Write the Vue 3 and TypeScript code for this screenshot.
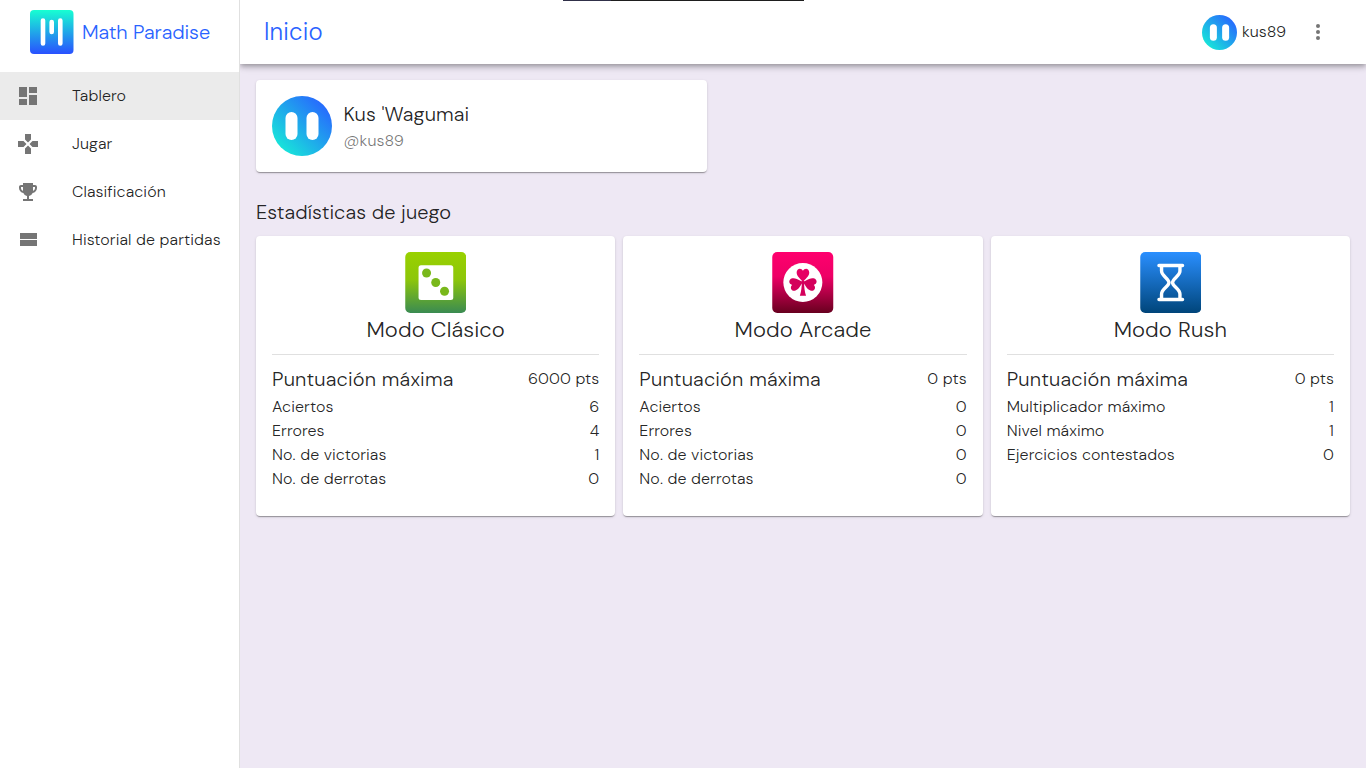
<script setup lang="ts">
interface Row {
  label: string
  value: string
}
interface Mode {
  key: 'classic' | 'arcade' | 'rush'
  name: string
  points: string
  rows: Row[]
}

const menu: { label: string; icon: string }[] = [
  { label: 'Tablero', icon: 'M3 13h8V3H3v10zm0 8h8v-6H3v6zm10 0h8V11h-8v10zm0-18v6h8V3h-8z' },
  {
    label: 'Jugar',
    icon: 'M15 7.5V2H9v5.5l3 3 3-3zM7.500 9H2v6h5.500l3-3-3-3zM9 16.500V22h6v-5.500l-3-3-3 3zM16.500 9l-3 3 3 3H22V9h-5.500z',
  },
  {
    label: 'Clasificación',
    icon: 'M19 5h-2V3H7v2H5c-1.100 0-2 .9-2 2v1c0 2.550 1.920 4.630 4.390 4.940.63 1.500 1.980 2.630 3.610 2.960V19H7v2h10v-2h-4v-3.100c1.630-.33 2.980-1.460 3.610-2.960C19.080 12.630 21 10.550 21 8V7c0-1.100-.9-2-2-2zM5 8V7h2v3.820C5.840 10.400 5 9.300 5 8zm14 0c0 1.300-.84 2.400-2 2.820V7h2v1z',
  },
  { label: 'Historial de partidas', icon: 'M4 18h17v-6H4v6zM4 5v6h17V5H4z' },
]

const leaf =
  'M0 .5C-2.200-3.200-6.300-5.300-6.300-9.400C-6.300-13.800-1.600-14.400 0-11.200C1.600-14.400 6.300-13.800 6.300-9.400C6.300-5.300 2.200-3.200 0 .5z'

const modes: Mode[] = [
  {
    key: 'classic',
    name: 'Modo Clásico',
    points: '6000 pts',
    rows: [
      { label: 'Aciertos', value: '6' },
      { label: 'Errores', value: '4' },
      { label: 'No. de victorias', value: '1' },
      { label: 'No. de derrotas', value: '0' },
    ],
  },
  {
    key: 'arcade',
    name: 'Modo Arcade',
    points: '0 pts',
    rows: [
      { label: 'Aciertos', value: '0' },
      { label: 'Errores', value: '0' },
      { label: 'No. de victorias', value: '0' },
      { label: 'No. de derrotas', value: '0' },
    ],
  },
  {
    key: 'rush',
    name: 'Modo Rush',
    points: '0 pts',
    rows: [
      { label: 'Multiplicador máximo', value: '1' },
      { label: 'Nivel máximo', value: '1' },
      { label: 'Ejercicios contestados', value: '0' },
    ],
  },
]
</script>

<template>
  <div class="app">
    <svg width="0" height="0" class="defs">
      <defs>
        <linearGradient id="gBrand" x1="0" y1="0" x2="0" y2="1">
          <stop offset="0" stop-color="#17ffd2" />
          <stop offset="1" stop-color="#2950ff" />
        </linearGradient>
        <linearGradient id="gAvatar" x1=".1" y1=".9" x2=".9" y2=".1">
          <stop offset="0" stop-color="#17ead8" />
          <stop offset="1" stop-color="#2864ff" />
        </linearGradient>
        <linearGradient id="gClassic" x1="0" y1="0" x2="0" y2="1">
          <stop offset="0" stop-color="#99d100" />
          <stop offset=".45" stop-color="#8dc60a" />
          <stop offset="1" stop-color="#3a8b52" />
        </linearGradient>
        <linearGradient id="gArcade" x1="0" y1="0" x2="0" y2="1">
          <stop offset="0" stop-color="#ff006e" />
          <stop offset=".4" stop-color="#ee0066" />
          <stop offset="1" stop-color="#68001f" />
        </linearGradient>
        <linearGradient id="gRush" x1="0" y1="0" x2="0" y2="1">
          <stop offset="0" stop-color="#2a8fff" />
          <stop offset="1" stop-color="#00457a" />
        </linearGradient>
      </defs>
    </svg>
    <aside class="side">
      <div class="brand">
        <svg width="44" height="44" viewBox="0 0 44 44">
          <rect width="43.500" height="44" rx="4" fill="url(#gBrand)" />
          <path d="M13 10.500v23M21.700 12v10M30.300 10.500v23" stroke="#fff" stroke-width="4.600" stroke-linecap="round" />
        </svg>
        <span class="brand-name">Math Paradise</span>
      </div>
      <nav>
        <a v-for="(item, i) in menu" :key="item.label" class="item" :class="{ active: i === 0 }">
          <svg width="24" height="24" viewBox="0 0 24 24" fill="#757575"><path :d="item.icon" /></svg>
          <span>{{ item.label }}</span>
        </a>
      </nav>
    </aside>

    <div class="content">
      <header class="bar">
        <h1>Inicio</h1>
        <div class="notch"></div>
        <div class="user">
          <svg width="35" height="35" viewBox="0 0 60 60">
            <circle cx="30" cy="30" r="30" fill="url(#gAvatar)" />
            <rect x="13.500" y="16" width="12" height="28" rx="6" fill="#fff" />
            <rect x="34.500" y="16" width="12" height="28" rx="6" fill="#fff" />
          </svg>
          <span class="nick">kus89</span>
          <svg class="dots" width="24" height="24" viewBox="0 0 24 24" fill="#757575">
            <circle cx="12" cy="6" r="2" /><circle cx="12" cy="12" r="2" /><circle cx="12" cy="18" r="2" />
          </svg>
        </div>
      </header>

      <main>
        <section class="card profile">
          <svg width="60" height="60" viewBox="0 0 60 60">
            <circle cx="30" cy="30" r="30" fill="url(#gAvatar)" />
            <rect x="13.500" y="16" width="12" height="28" rx="6" fill="#fff" />
            <rect x="34.500" y="16" width="12" height="28" rx="6" fill="#fff" />
          </svg>
          <div class="who">
            <div class="full">Kus 'Wagumai</div>
            <div class="handle">@kus89</div>
          </div>
        </section>

        <h2>Estadísticas de juego</h2>

        <div class="grid">
          <section v-for="m in modes" :key="m.key" class="card mode">
            <svg v-if="m.key === 'classic'" class="logo" viewBox="0 0 61 61">
              <rect width="61" height="61" rx="5" fill="url(#gClassic)" />
              <rect x="13.300" y="13.300" width="34.700" height="34.700" rx="2.500" fill="#fff" />
              <g fill="#79b81b">
                <circle cx="21.300" cy="21" r="4.500" /><circle cx="30.500" cy="30.500" r="4.500" /><circle cx="39.300" cy="39.200" r="4.500" />
              </g>
            </svg>
            <svg v-else-if="m.key === 'arcade'" class="logo" viewBox="0 0 61 61">
              <rect width="61" height="61" rx="5" fill="url(#gArcade)" />
              <circle cx="30.600" cy="30.500" r="19.500" fill="#fff" />
              <g fill="#d4005b">
                <path d="M29.700 29h2c.1 6 .8 11 2.100 14.800h-6.200c1.300-3.800 2-8.800 2.100-14.800z" />
                <path :d="leaf" transform="translate(30.700 30)" fill="#e60064" />
                <path :d="leaf" transform="translate(30.700 30) rotate(-105)" />
                <path :d="leaf" transform="translate(30.700 30) rotate(105)" />
              </g>
            </svg>
            <svg v-else class="logo" viewBox="0 0 61 61">
              <rect width="61" height="61" rx="5" fill="url(#gRush)" />
              <g fill="none" stroke="#fff" stroke-width="3.400" stroke-linecap="round">
                <path d="M18.700 13.500h23.600M18.700 47.500h23.600" />
                <path d="M21.300 14v5c0 5 7.400 7.500 7.400 11.500s-7.400 6.500-7.400 11.500v5M39.700 14v5c0 5-7.400 7.500-7.400 11.500s7.400 6.500 7.400 11.500v5" />
              </g>
            </svg>
            <h3>{{ m.name }}</h3>
            <div class="row top">
              <span class="max">Puntuación máxima</span><span>{{ m.points }}</span>
            </div>
            <div v-for="r in m.rows" :key="r.label" class="row">
              <span>{{ r.label }}</span><span>{{ r.value }}</span>
            </div>
          </section>
        </div>
      </main>
    </div>
  </div>
</template>

<style>
body {
  margin: 0;
  overflow: hidden;
}
</style>

<style scoped>
.app {
  display: flex;
  width: 100%;
  height: 768px;
  background: #eee8f4;
  color: rgba(0, 0, 0, 0.87);
  font: 300 16px/24px 'DM Sans', Inter, 'Open Sans', sans-serif;
  letter-spacing: 0.09px;
}
.defs {
  position: absolute;
}
svg {
  display: block;
  flex: none;
}
h1,
h2,
h3 {
  margin: 0;
  font-weight: 300;
}
.side {
  box-sizing: border-box;
  width: 240px;
  flex: none;
  background: #fff;
  border-right: 1px solid #e0e0e0;
}
.brand {
  display: flex;
  align-items: center;
  gap: 8px;
  height: 64px;
  padding-left: 30px;
  margin-bottom: 8px;
}
.brand-name {
  font-size: 20px;
  letter-spacing: -0.08px;
  color: #2962ff;
  white-space: nowrap;
}
.item {
  display: flex;
  align-items: center;
  gap: 32px;
  height: 48px;
  padding-left: 16px;
  white-space: nowrap;
}
.item.active {
  background: #ebebeb;
}
.content {
  flex: 1;
  min-width: 0;
}
.bar {
  position: relative;
  display: flex;
  align-items: center;
  justify-content: space-between;
  height: 64px;
  padding: 0 36px 0 24px;
  background: #fff;
  box-shadow: 0 2px 4px -1px rgba(0, 0, 0, 0.2), 0 4px 5px rgba(0, 0, 0, 0.14), 0 1px 10px rgba(0, 0, 0, 0.12);
  clip-path: inset(0 0 -20px 0);
}
.notch {
  position: absolute;
  top: 0;
  left: 323px;
  width: 241px;
  height: 1px;
  background: linear-gradient(90deg, #303049 48px, #1e1e1e 48px);
}
h1 {
  font-size: 24px;
  line-height: 32px;
  letter-spacing: 0.2px;
  color: #2962ff;
}
.user {
  display: flex;
  align-items: center;
  gap: 5px;
}
.nick {
  letter-spacing: 0;
}
.dots {
  margin-left: 15px;
}
main {
  padding: 16px;
}
.card {
  box-sizing: border-box;
  background: #fff;
  border-radius: 4px;
  box-shadow: 0 2px 1px -1px rgba(0, 0, 0, 0.2), 0 1px 1px rgba(0, 0, 0, 0.14), 0 1px 3px rgba(0, 0, 0, 0.12);
}
.profile {
  display: flex;
  align-items: center;
  gap: 11.500px;
  width: 451px;
  height: 92px;
  padding: 16px;
}
.full {
  font-size: 20px;
  line-height: 28px;
}
.handle {
  padding-top: 1px;
  color: rgba(0, 0, 0, 0.54);
}
h2 {
  margin: 24px 0 8px;
  font-size: 20px;
  line-height: 32px;
}
.grid {
  display: grid;
  grid-template-columns: repeat(3, 1fr);
  gap: 8px;
}
.mode {
  height: 280px;
  padding: 16px;
}
.logo {
  width: 61.500px;
  height: 61px;
  margin: 0 auto;
}
h3 {
  height: 41px;
  margin-bottom: 8px;
  border-bottom: 1px solid #e0e0e0;
  font-size: 22px;
  line-height: 33px;
  text-align: center;
}
.row {
  display: flex;
  justify-content: space-between;
}
.top {
  align-items: center;
  height: 32px;
}
.max {
  font-size: 20px;
  letter-spacing: 0.17px;
}
</style>
